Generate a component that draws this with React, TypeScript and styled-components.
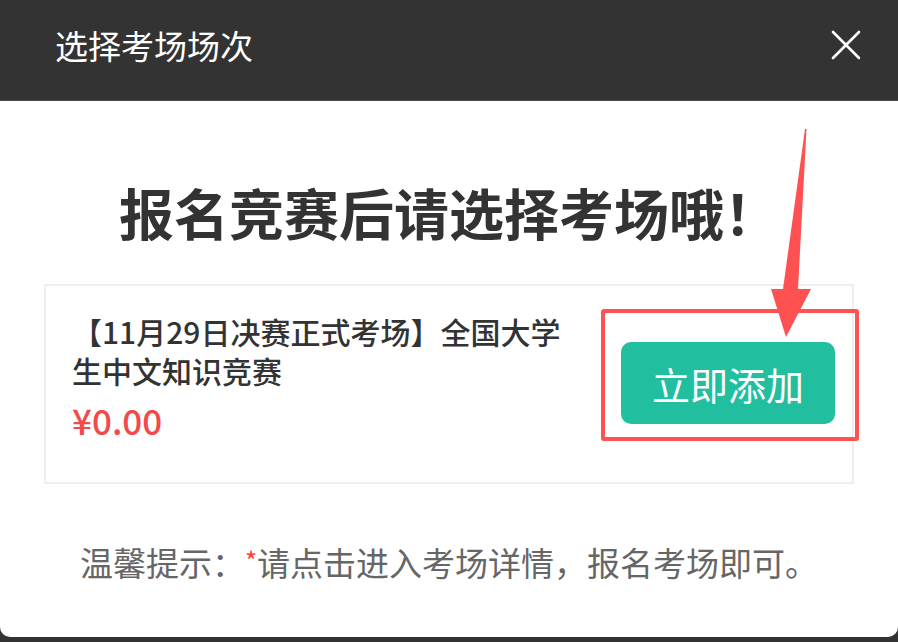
import styled, { createGlobalStyle } from "styled-components";

const GlobalStyle = createGlobalStyle`
  html, body {
    margin: 0;
    padding: 0;
    background: #333333;
  }
  body {
    font-family: "Noto Sans CJK SC", "Noto Sans", sans-serif;
  }
`;

export default function App() {
  return (
    <>
      <GlobalStyle />
      <Dialog>
        <Header>
          <HeaderTitle>选择考场场次</HeaderTitle>
          <CloseButton aria-label="关闭">
            <svg width="30" height="30" viewBox="0 0 30 30">
              <path d="M2 2 L28 28 M28 2 L2 28" stroke="#fff" strokeWidth="2.6" strokeLinecap="round" />
            </svg>
          </CloseButton>
        </Header>
        <Body>
          <Heading>报名竞赛后请选择考场哦！</Heading>
          <Card>
            <CardInfo>
              <CardTitle>【11月29日决赛正式考场】全国大学生中文知识竞赛</CardTitle>
              <Price>¥0.00</Price>
            </CardInfo>
            <ButtonWrap>
              <AddButton>立即添加</AddButton>
              <Highlight />
            </ButtonWrap>
          </Card>
          <Hint>
            温馨提示：<Star>*</Star>请点击进入考场详情，报名考场即可。
          </Hint>
          {/* 标注箭头 */}
          <Arrow width="50" height="215" viewBox="0 0 50 215">
            <polygon points="40,5 41.5,5 33,165 46,165 21,213 6,165 18,165" fill="#ff5151" />
          </Arrow>
        </Body>
      </Dialog>
    </>
  );
}

const Dialog = styled.div`
  width: 898px;
  height: 637px;
  display: flex;
  flex-direction: column;
`;

const Header = styled.div`
  height: 101px;
  flex-shrink: 0;
  background: #333333;
  border-bottom: 1px solid #4a4a4a;
  display: flex;
  align-items: center;
  justify-content: space-between;
  padding: 0 37px 0 55px;
  box-sizing: border-box;
`;

const HeaderTitle = styled.div`
  color: #ffffff;
  font-size: 33px;
  line-height: 1;
  margin-top: -10px;
`;

const CloseButton = styled.div`
  width: 30px;
  height: 30px;
  margin-top: -10px;
  display: flex;
`;

const Body = styled.div`
  flex: 1;
  position: relative;
  background: #ffffff;
  border-radius: 0 0 10px 10px;
  padding: 0 44px;
  display: flex;
  flex-direction: column;
`;

const Heading = styled.div`
  margin-top: 72px;
  text-align: center;
  font-size: 55px;
  line-height: 76px;
  font-weight: 700;
  color: #333333;
`;

const Card = styled.div`
  margin-top: 35px;
  height: 200px;
  box-sizing: border-box;
  border: 2px solid #eeeeee;
  display: flex;
  align-items: flex-start;
  padding: 26px 17px 0 26px;
`;

const CardInfo = styled.div`
  width: 500px;
`;

const CardTitle = styled.div`
  font-size: 30px;
  line-height: 39px;
  font-weight: 500;
  color: #333333;
`;

const Price = styled.div`
  margin-top: 7px;
  font-size: 35px;
  line-height: 46px;
  font-weight: 500;
  color: #f2494a;
`;

const ButtonWrap = styled.div`
  position: relative;
  margin-left: auto;
  margin-top: 30px;
`;

const AddButton = styled.div`
  width: 214px;
  height: 82px;
  border-radius: 10px;
  background: #21bf9f;
  color: #ffffff;
  font-size: 38px;
  display: flex;
  align-items: center;
  justify-content: center;
`;

const Highlight = styled.div`
  position: absolute;
  top: -33px;
  left: -20px;
  right: -24px;
  bottom: -17px;
  border: 4px solid #ff5252;
  border-radius: 3px;
`;

const Hint = styled.div`
  margin-top: 54px;
  text-align: center;
  font-size: 33px;
  line-height: 44px;
  color: #666666;
`;

const Star = styled.span`
  color: #ff3b3b;
  font-size: 26px;
  vertical-align: 5px;
`;

const Arrow = styled.svg`
  position: absolute;
  left: 765px;
  top: 23px;
`;
